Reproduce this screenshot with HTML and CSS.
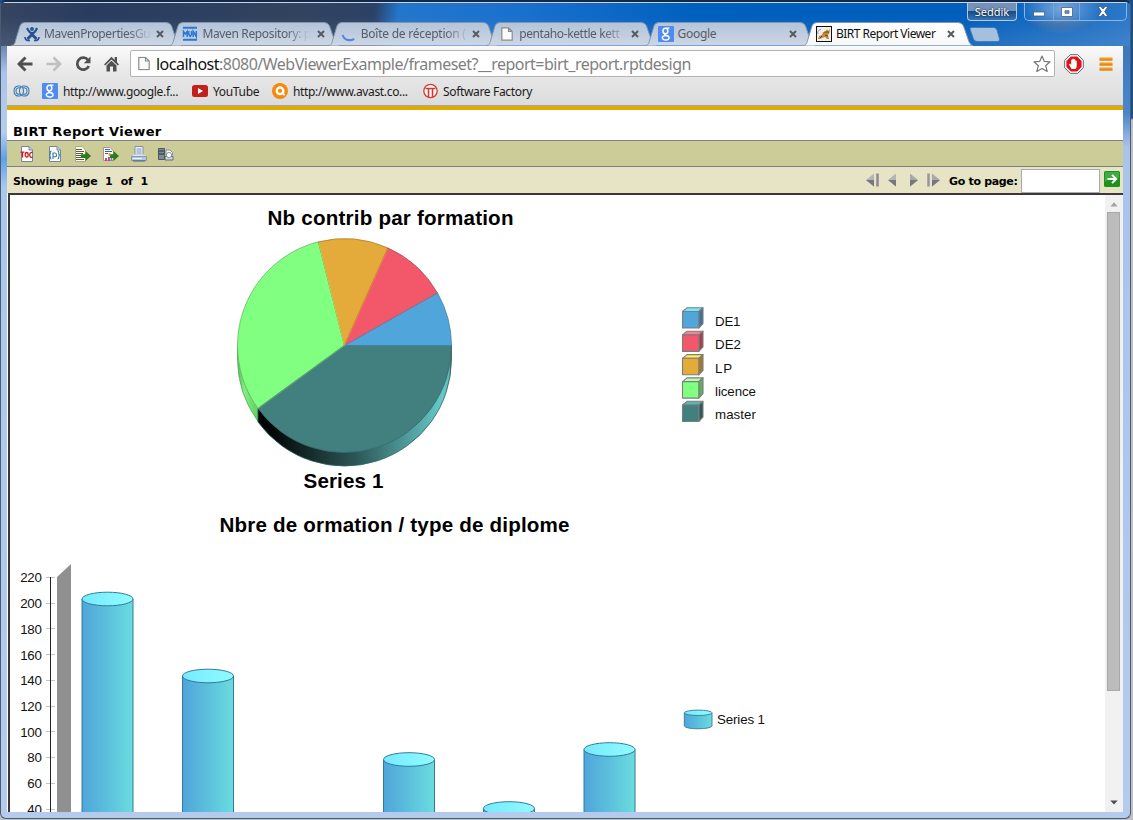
FILE: index.html
```html
<!DOCTYPE html>
<html lang="fr">
<head>
<meta charset="utf-8">
<title>BIRT Report Viewer</title>
<link rel="stylesheet" href="styles.css">
</head>
<body>
<svg class="defs" width="0" height="0">
  <defs>
    <linearGradient id="tabFill" x1="0" y1="0" x2="0" y2="1"><stop offset="0" stop-color="#b3c4da"/><stop offset="1" stop-color="#cdd6e4"/></linearGradient>
    <linearGradient id="tabActive" x1="0" y1="0" x2="0" y2="1"><stop offset="0" stop-color="#ffffff"/><stop offset="1" stop-color="#f8f8f8"/></linearGradient>
    <symbol id="tabShape" viewBox="0 0 170 24"><path d="M0 23.500C4 23.500 4 20 5 17L9 4Q10 .5 14 .5H155Q159 .5 160.500 4L165 17Q167 23.500 170 23.500" stroke="#8296b0"/></symbol>
    <symbol id="close" viewBox="0 0 8 8"><path d="M1 1L7 7M7 1L1 7" stroke="#555a60" stroke-width="1.900" fill="none"/></symbol>
    <symbol id="gicon" viewBox="0 0 16 16"><rect width="16" height="16" rx="1" fill="#4f8bf0"/><g fill="none" stroke="#fff"><ellipse cx="7.400" cy="5" rx="2.400" ry="2.800" stroke-width="1.500"/><ellipse cx="7.700" cy="11.800" rx="3.400" ry="2.200" stroke-width="1.400"/><path d="M8 2.200H11.500M7 7.500Q6 8.800 8 9.200Q10 9.600 10.600 10.800" stroke-width="1.300"/></g></symbol>
    <symbol id="page" viewBox="0 0 12 14"><path d="M.8 .8H7.500L11.200 4.500V13.200H.8ZM7.500 .8V4.500H11.200" fill="#fafafa" stroke="#8b8b8b" stroke-width="1.200"/></symbol>
  </defs>
</svg>
<div class="window">
  <header class="titlebar">
    <nav class="tabs">
      <div class="tab"><svg class="shape" width="170" height="24" fill="url(#tabFill)"><use href="#tabShape"/></svg>
        <svg class="fav" viewBox="0 0 16 16"><g fill="none" stroke="#28528f"><path d="M3 2Q5.500 7 8 7.300T13 2" stroke-width="2.200"/><path d="M8 6V8.500L3.500 13M8 8.500L12.500 13" stroke-width="3"/><path d="M.8 11Q1.500 15 6 14.500M15.200 11Q14.500 15 10 14.500" stroke-width="1.500"/></g><circle cx="8" cy="3" r="1.900" fill="#28528f"/></svg>
        <span class="label fade l1">MavenPropertiesGu</span><svg class="x"><use href="#close"/></svg></div>
      <div class="tab"><svg class="shape" width="170" height="24" fill="url(#tabFill)"><use href="#tabShape"/></svg>
        <svg class="fav" viewBox="0 0 16 16"><path d="M1 1.800H15M1 13.700H15" stroke="#2878d8" stroke-width="2"/><path d="M1.500 11V5.500L3.400 8L5.200 5.500V11M6.800 5V8.500L8.200 10.500L9.500 8.500V5M11.200 11V5.500L14.300 10.500V5" fill="none" stroke="#2878d8" stroke-width="1.500"/></svg>
        <span class="label fade l2">Maven Repository: p</span><svg class="x"><use href="#close"/></svg></div>
      <div class="tab"><svg class="shape" width="170" height="24" fill="url(#tabFill)"><use href="#tabShape"/></svg>
        <svg class="fav" viewBox="0 0 16 16"><path d="M1.600 9Q3.300 14 8 14.200Q11 14.300 13.200 12.800" fill="none" stroke="#4e8be0" stroke-width="2.200"/></svg>
        <span class="label fade l3">Boîte de réception (</span><svg class="x"><use href="#close"/></svg></div>
      <div class="tab"><svg class="shape" width="170" height="24" fill="url(#tabFill)"><use href="#tabShape"/></svg>
        <svg class="fav" viewBox="-2 -1 16 16"><use href="#page" width="12" height="14"/></svg>
        <span class="label fade l4">pentaho-kettle kett</span><svg class="x"><use href="#close"/></svg></div>
      <div class="tab"><svg class="shape" width="170" height="24" fill="url(#tabFill)"><use href="#tabShape"/></svg>
        <svg class="fav" viewBox="0 0 16 16"><use href="#gicon"/></svg>
        <span class="label l5">Google</span><svg class="x"><use href="#close"/></svg></div>
      <div class="tab active"><svg class="shape" width="170" height="24" fill="url(#tabActive)"><use href="#tabShape"/></svg>
        <svg class="fav" viewBox="0 0 16 16"><rect x=".5" y=".5" width="15" height="15" fill="#f4f0e6" stroke="#111"/><path d="M2 8Q1 4 5 3.500" fill="none" stroke="#8c959c"/><path d="M2 13L3 10L6 9L7 6L9 6L11 3L12 5L14 3L13.500 7L12 9L13 13H11L9 11L6 12L4 13Z" fill="#c18a3e"/><path d="M8 6H13M4 12L6 10M9 9L12 10" stroke="#493d27" stroke-width=".8"/></svg>
        <span class="label l6">BIRT Report Viewer</span><svg class="x"><use href="#close"/></svg></div>
      <svg class="newtab" viewBox="0 0 31 15"><path d="M3 .5H25Q27 .5 28 3L30.500 12Q31 14 29 14.500H8Q5.500 14.500 4.500 12L1 2Q.5 .5 3 .5Z" fill="#a5bfde" stroke="#3a76b8" stroke-width=".8"/></svg>
    </nav>
    <div class="controls">
      <div class="user">Seddik</div>
      <div class="buttons">
        <span><svg width="12" height="6" viewBox="0 0 12 6"><rect x=".5" y="1" width="11" height="4" fill="#fff" stroke="#4d5f78" stroke-width=".8"/></svg></span>
        <span><svg width="12" height="10" viewBox="0 0 12 10"><path d="M.5 .5H11.500V9.500H.5ZM4 3.700V6.300H8V3.700Z" fill="#fff" fill-rule="evenodd" stroke="#4d5f78" stroke-width=".8"/></svg></span>
        <span><svg width="12" height="11" viewBox="0 0 12 11"><path d="M1 .6H4L6 3L8 .6H11L7.700 5.500L11 10.400H8L6 8L4 10.400H1L4.300 5.500Z" fill="#fff" stroke="#3d4f6b" stroke-width=".8"/></svg></span>
      </div>
    </div>
  </header>

  <section class="toolbar">
    <div class="address-row">
      <svg width="16" height="16" viewBox="0 0 16 16"><path d="M8.500 1.500L2 8L8.500 14.500M2 8H15.500" fill="none" stroke="#505050" stroke-width="2.900"/></svg>
      <svg width="16" height="16" viewBox="0 0 16 16"><path d="M7.500 1.500L14 8L7.500 14.500M14 8H.5" fill="none" stroke="#c0c0c0" stroke-width="2.700"/></svg>
      <svg width="16" height="16" viewBox="0 0 16 16"><path d="M13.200 4.200A6 6 0 1 0 13.800 10" fill="none" stroke="#505050" stroke-width="2.700"/><path d="M15.500 .5V7.200H8.800Z" fill="#505050"/></svg>
      <svg class="home" width="15" height="16" viewBox="0 0 15 16"><path d="M7.500 .8L0 8.400L1.200 9.600L7.500 3.400L13.800 9.600L15 8.400L13 6.300V1H10.700V4ZM2.500 9.600L7.500 4.700L12.500 9.600V15.500H9V10.500H6V15.500H2.500Z" fill="#505050"/></svg>
      <div class="address">
        <svg width="12" height="15" viewBox="0 0 12 14"><use href="#page" width="12" height="14"/></svg>
        <span class="url"><b>localhost</b>:8080/WebViewerExample/frameset?__report=birt_report.rptdesign</span>
        <svg class="star" width="18" height="18" viewBox="0 0 18 18"><path d="M9 1L11.200 6.300L17 6.800L12.700 10.700L14.200 16.500L9 13.400L3.800 16.500L5.300 10.700L1 6.800L6.800 6.300Z" fill="#fff" stroke="#777" stroke-width="1.200" stroke-linejoin="round"/></svg>
      </div>
      <svg width="20" height="20" viewBox="0 0 20 20"><path d="M6.200 .7H13.800L19.300 6.200V13.800L13.800 19.300H6.200L.7 13.800V6.200Z" fill="#fff" stroke="#666" stroke-width="1"/><path d="M6.900 2.400H13.100L17.600 6.900V13.100L13.100 17.600H6.900L2.400 13.100V6.900Z" fill="#d8151b"/><path d="M7.500 15L5 10.500Q5 9.300 6.200 9.800L7.200 11V6Q7.800 5.200 8.400 6V5Q9.100 4.200 9.800 5V5.500Q10.600 4.700 11.200 5.600V6.800Q12 6 12.700 7V11.500Q12.700 14 11.500 15Z" fill="#fff"/></svg>
      <svg class="menu" width="14" height="14" viewBox="0 0 14 14"><path d="M.5 2H13.500M.5 7H13.500M.5 12H13.500" stroke="#f39b1c" stroke-width="3"/><path d="M.5 3H13.500M.5 8H13.500M.5 13H13.500" stroke="#d97812"/></svg>
    </div>
    <div class="bookmarks">
      <svg width="17" height="16" viewBox="0 0 17 16"><g fill="none" stroke="#3a7fb5" stroke-width="1.100"><path d="M7 3Q1 2.500 1 8T7 13M10 3Q16 2.500 16 8T10 13"/><path d="M7.500 5Q3 4 3 8T7.500 11M9.500 5Q14 4 14 8T9.500 11"/><path d="M7 3Q10.500 4 10.500 8T7 13M10 3Q6.500 4 6.500 8T10 13"/></g></svg>
      <a class="b1"><svg width="16" height="16"><use href="#gicon"/></svg><span>http://www.google.f...</span></a>
      <a class="b2"><svg width="16" height="16" viewBox="0 0 16 16"><rect y="2" width="16" height="12" rx="2.500" fill="#c2201c"/><path d="M6 5L11 8L6 11Z" fill="#fff"/></svg><span>YouTube</span></a>
      <a class="b3"><svg width="16" height="16" viewBox="0 0 16 16"><circle cx="8" cy="8" r="8" fill="#f58a0a"/><circle cx="8" cy="7.800" r="3.300" fill="none" stroke="#fff" stroke-width="2.300"/><path d="M11.300 7V10.500Q11.300 12 12.800 11.500" fill="none" stroke="#fff" stroke-width="1.800"/></svg><span>http://www.avast.co...</span></a>
      <a class="b4"><svg width="15" height="16" viewBox="0 0 15 16"><circle cx="7.500" cy="8" r="6.700" fill="#fff" stroke="#d33a30" stroke-width="1.300"/><path d="M2.500 5.500H12.500M5.500 5.500V14M9.500 5.500V14" fill="none" stroke="#d33a30" stroke-width="1.600"/></svg><span>Software Factory</span></a>
    </div>
  </section>

  <main class="viewer">
    <h1><span>BIRT Report Viewer</span></h1>
    <div class="tools">
      <svg width="16" height="16" viewBox="0 0 16 16"><path d="M2.500 .5H10L13.500 4V15.500H2.500Z" fill="#fff" stroke="#75869a"/><path d="M10 .5V4H13.500" fill="#c7d6e8" stroke="#75869a"/><g fill="none" stroke="#d01c1c" stroke-width="1.300"><path d="M1.500 6.200H5.500M3.500 6V11.500"/><ellipse cx="7.700" cy="8.800" rx="1.500" ry="2.300"/><path d="M13.500 6.500Q10.700 5.800 10.700 8.800T13.500 11.200"/></g></svg>
      <svg width="16" height="16" viewBox="0 0 16 16"><path d="M2.500 .5H10L13.500 4V15.500H2.500Z" fill="#fff" stroke="#75869a"/><path d="M10 .5V4H13.500" fill="#c7d6e8" stroke="#75869a"/><g fill="none" stroke="#2b7bb0" stroke-width="1.100"><path d="M4.500 5Q3 5 3.300 7Q3.300 9 2 9Q3.300 9 3.300 11Q3 13 4.500 13M10.500 5Q12 5 11.700 7Q11.700 9 13 9Q11.700 9 11.700 11Q12 13 10.500 13M6 13V7H8Q9.500 7 9.500 9T8 10.800H6"/></g></svg>
      <svg width="18" height="16" viewBox="0 0 18 16"><path d="M1.500 .5H8L11.500 4V15.500H1.500Z" fill="#fffce8" stroke="#aaa98c"/><path d="M2 3.500H8M2 5.500H10M2 7.500H9M2 9.500H7M2 11.500H8M2 13.500H10" stroke="#5b5b4e" stroke-width="1"/><path d="M7 8.300H11.500V5L17 10L11.500 15V11.900H7Z" fill="#2d7b1c"/></svg>
      <svg width="18" height="16" viewBox="0 0 18 16"><path d="M1.500 1.500H8L11.500 5V14.500H1.500Z" fill="#fff" stroke="#b0977c"/><path d="M3 3.500H8M3 5.500H10M3 7.500H6" stroke="#2b62c8" stroke-width="1"/><path d="M4 12V15M7 11V15" stroke="#d82d8b" stroke-width="1.800"/><path d="M9.500 11V15" stroke="#2aa6d0" stroke-width="1.800"/><path d="M8 8.300H11.500V5L17 10L11.500 15V11.900H8Z" fill="#2d7b1c"/><path d="M7.500 10V7" stroke="#e79824" stroke-width="1.800"/></svg>
      <svg width="16" height="16" viewBox="0 0 16 16"><path d="M4 .5H12V9H4Z" fill="#eef4fb" stroke="#8091a8"/><path d="M5.500 3H10.500M5.500 5H10.500M5.500 7H10.500" stroke="#7991af"/><path d="M3 8.500H13L15.500 11H.5Z" fill="#dce7f3"/><path d="M.5 10.500H15.500V14.500H.5Z" fill="#b4c7de" stroke="#7387a8" stroke-width=".8"/><path d="M2 12.500H11" stroke="#eff5ff"/><path d="M2 15H14" stroke="#4d6182"/></svg>
      <svg width="16" height="16" viewBox="0 0 16 16"><path d="M.5 2.500H6.500V13.500H.5Z" fill="#7e8b95" stroke="#4c5964"/><path d="M1 5H6M1 8H6" stroke="#26313b"/><path d="M8 4H12L14.500 6.500V9H8Z" fill="#f4f7fb" stroke="#74808c" stroke-width=".8"/><path d="M7 10.500H15V14H7Z" fill="#cbd6e3" stroke="#4c5964" stroke-width=".8"/><circle cx="11" cy="9" r="2.600" fill="#fff" stroke="#74808c" stroke-width=".8"/></svg>
    </div>
    <div class="navbar">
      <span class="showing">Showing page</span><span class="num">1</span><span class="of">of</span><span class="num2">1</span>
      <div class="pager">
        <svg width="13" height="14" viewBox="0 0 13 14"><path d="M8 .5V13.500L0 7Z" fill="#b5b5b8"/><path d="M8 7V13.500L0 7Z" fill="#77777c"/><path d="M11.500 .5V13.500" stroke="#8a8a8e" stroke-width="2.500"/></svg>
        <svg width="8" height="14" viewBox="0 0 8 14"><path d="M8 .5V13.500L0 7Z" fill="#b5b5b8"/><path d="M8 7V13.500L0 7Z" fill="#77777c"/></svg>
        <svg class="next" width="8" height="14" viewBox="0 0 8 14"><path d="M0 .5V13.500L8 7Z" fill="#a9a9ac"/><path d="M0 7V13.500L8 7Z" fill="#77777c"/></svg>
        <svg width="13" height="14" viewBox="0 0 13 14"><path d="M5 .5V13.500L13 7Z" fill="#a9a9ac"/><path d="M5 7V13.500L13 7Z" fill="#77777c"/><path d="M1.500 .5V13.500" stroke="#96969a" stroke-width="2.500"/></svg>
      </div>
      <label>Go to page:</label>
      <input type="text" aria-label="Go to page">
      <svg class="go" width="16" height="16" viewBox="0 0 16 16"><rect width="16" height="16" rx="1.500" fill="#1d931d"/><path d="M1 1H15V7Q7 6 1 11Z" fill="#5cb95c" opacity=".6"/><path d="M3.500 8H12M8 3.800L12.200 8L8 12.200" fill="none" stroke="#fff" stroke-width="1.900"/></svg>
    </div>
    <div class="report">
      <svg class="charts" width="1095" height="617" viewBox="10 195 1095 617">
        <defs>
          <linearGradient id="side" gradientUnits="userSpaceOnUse" x1="257" y1="0" x2="452" y2="0"><stop offset="0" stop-color="#000"/><stop offset=".1" stop-color="#050b0b"/><stop offset=".5" stop-color="#2b5555"/><stop offset=".95" stop-color="#67c9c9"/><stop offset=".985" stop-color="#5fb8b8"/><stop offset="1" stop-color="#2d5c5c"/></linearGradient>
          <linearGradient id="sideGreen" x1="0" y1="0" x2="1" y2="0"><stop offset="0" stop-color="#5dba5d"/><stop offset=".35" stop-color="#80f080"/><stop offset="1" stop-color="#62cc62"/></linearGradient>
          <linearGradient id="body"><stop offset="0" stop-color="#50a5da"/><stop offset=".5" stop-color="#5cc0dc"/><stop offset="1" stop-color="#6bdcdf"/></linearGradient>
          <linearGradient id="lid"><stop offset="0" stop-color="#76eafd"/><stop offset="1" stop-color="#90fbff"/></linearGradient>
          <g id="cyl" stroke="#327a9d"><path d="M0 0V240H51V0" fill="url(#body)"/><ellipse cx="25.500" cy="0" rx="25.500" ry="6.800" fill="url(#lid)"/></g>
        </defs>
        <g class="title">
          <text x="267.500" y="225" textLength="246">Nb contrib par formation</text>
          <text x="303.500" y="488" textLength="80">Series 1</text>
          <text x="219.500" y="532" textLength="350">Nbre de ormation / type de diplome</text>
        </g>
        <g stroke-width=".8">
          <path d="M237.500 345.500A107 107 0 0 0 258 408.500V421.500Q237.500 393 237.500 359Z" fill="url(#sideGreen)" stroke="#5aa85a"/>
          <path d="M451.500 345.500V359A107 107 0 0 1 258 422V408.500Z" fill="url(#side)" stroke="#2f6060"/>
          <path d="M344.500 345.500H451.500A107 107 0 0 1 258 408.500Z" fill="#427f7f" stroke="#376c6c"/>
          <path d="M344.500 345.500L258 408.500A107 107 0 0 1 318.500 241.800Z" fill="#80ff80" stroke="#67b967"/>
          <path d="M344.500 345.500L318.500 241.800A107 107 0 0 1 388 248Z" fill="#e5ab3a" stroke="#a98036"/>
          <path d="M344.500 345.500L388 248A107 107 0 0 1 437.500 293Z" fill="#f2586a" stroke="#b14654"/>
          <path d="M344.500 345.500L437.500 293A107 107 0 0 1 451.500 345.500Z" fill="#50a5da" stroke="#3e7da5"/>
        </g>
        <g stroke-width="1.200">
          <path d="M344.500 345.500L438 292.800" stroke="#a07295" stroke-width=".8"/>
          <path d="M344.500 345.500L319 243" stroke="#c8c44a"/>
          <path d="M344.500 345.500L387.600 249" stroke="#e38548"/>
          <path d="M344.500 345.500L259 407.800" stroke="#5a9f74"/>
        </g>
        <g stroke="#7d7d7d" stroke-width="1.100" stroke-linejoin="round">
          <g transform="translate(682.500 307.500)"><path d="M0 4L4.500 .3H20.500L16.300 4Z" fill="#70ebfc"/><path d="M16.300 4L20.500 .3V16L16.300 20.500Z" fill="#39759b"/><path d="M0 4H16.300V20.500H0Z" fill="#50a5da"/></g>
          <g transform="translate(682.500 330.900)"><path d="M0 4L4.500 .3H20.500L16.300 4Z" fill="#ff7d97"/><path d="M16.300 4L20.500 .3V16L16.300 20.500Z" fill="#aa3f4c"/><path d="M0 4H16.300V20.500H0Z" fill="#f2586a"/></g>
          <g transform="translate(682.500 354.300)"><path d="M0 4L4.500 .3H20.500L16.300 4Z" fill="#fff253"/><path d="M16.300 4L20.500 .3V16L16.300 20.500Z" fill="#a37a2a"/><path d="M0 4H16.300V20.500H0Z" fill="#e5ab3a"/></g>
          <g transform="translate(682.500 377.600)"><path d="M0 4L4.500 .3H20.500L16.300 4Z" fill="#b5ffb5"/><path d="M16.300 4L20.500 .3V16L16.300 20.500Z" fill="#5bb45b"/><path d="M0 4H16.300V20.500H0Z" fill="#80ff80"/></g>
          <g transform="translate(682.500 401)"><path d="M0 4L4.500 .3H20.500L16.300 4Z" fill="#5db4b4"/><path d="M16.300 4L20.500 .3V16L16.300 20.500Z" fill="#2e5959"/><path d="M0 4H16.300V20.500H0Z" fill="#427f7f"/></g>
        </g>
        <g class="legend">
          <text x="715" y="326" textLength="25.500">DE1</text>
          <text x="715" y="349" textLength="26">DE2</text>
          <text x="715" y="373" textLength="17">LP</text>
          <text x="715" y="396" textLength="41">licence</text>
          <text x="715" y="419" textLength="41">master</text>
          <text x="717" y="724" textLength="48">Series 1</text>
        </g>
        <g class="axis">
          <text x="41.500" y="582">220</text><text x="41.500" y="608">200</text><text x="41.500" y="634">180</text><text x="41.500" y="660">160</text><text x="41.500" y="685">140</text><text x="41.500" y="711">120</text><text x="41.500" y="737">100</text><text x="41.500" y="762">80</text><text x="41.500" y="788">60</text><text x="41.500" y="814">40</text>
        </g>
        <path d="M46 577.500H55M46 603.500H55M46 628.500H55M46 654.500H55M46 680.500H55M46 706.500H55M46 731.500H55M46 757.500H55M46 783.500H55M46 809.500H55" stroke="#c4c4c4"/>
        <path d="M50.500 577V812" stroke="#222"/>
        <path d="M57 577L71 564V812H57Z" fill="#909090"/>
        <use href="#cyl" x="82" y="599"/>
        <use href="#cyl" x="182.500" y="676"/>
        <use href="#cyl" x="383.500" y="759.500"/>
        <use href="#cyl" x="483.500" y="808.500"/>
        <use href="#cyl" x="584" y="749.500"/>
        <g stroke="#327a9d" stroke-width=".9"><path d="M684.300 713V726Q686 728.700 698 728.800Q710 728.700 712 726V713" fill="url(#body)"/><ellipse cx="698.200" cy="712.800" rx="13.900" ry="2.700" fill="url(#lid)"/></g>
      </svg>
      <div class="scrollbar">
        <svg width="8" height="5" viewBox="0 0 8 5"><path d="M4 .3L7.700 4.500H.3Z" fill="#a3a3a3"/></svg>
        <div class="thumb"></div>
        <svg class="down" width="8" height="5" viewBox="0 0 8 5"><path d="M.3 .5H7.700L4 4.600Z" fill="#4d4d4d"/></svg>
      </div>
    </div>
  </main>
</div>
</body>
</html>
```
FILE: styles.css
```css
* { box-sizing: border-box; }
body {
  margin: 0; width: 1133px; height: 820px; overflow: hidden;
  background: linear-gradient(#15508f 0 88px, #1c4f86 118px, #c0c0c0 120px);
  font-family: "Noto Sans", "Open Sans", sans-serif;
}
.defs { position: absolute; }
svg { display: block; flex: none; }
.window {
  display: flex; flex-direction: column;
  width: 1131px; height: 819px; padding: 2px 7px 6px 6px;
  border: 1px solid #4d5b70; border-top: 2px solid #13294a; border-radius: 6px;
  background:
    linear-gradient(#c8d4e2, #c8d4e2) 0 0 / 100% 1px no-repeat,
    radial-gradient(ellipse 40px 26px at 1060px 6px, #b4cdec99, transparent) no-repeat,
    radial-gradient(ellipse 36px 8px at 1060px 22px, #30486e88, transparent) no-repeat,
    linear-gradient(transparent 14px, #9db2cf30 44px, transparent 44px) no-repeat,
    linear-gradient(97deg, #36445f 0, #293c60 90px, #32435f 300px, #2c4167 372px, #2376cc 396px, #1970cd 520px, #0060bf 690px, #005ebc 960px, #2e79c8 1131px) 0 0 / 100% 44px no-repeat,
    linear-gradient(#3b79bc 46px, #4c86ca 112px, #aac3ea 145px, #b3cbee 100%) 100% 0 / 9px 100% no-repeat,
    linear-gradient(#6f8cb5 46px, #a9c4ea 70px, #b7cdec 130px, #5fa0e6 157px, #a9c8ef 185px, #b4cbed 100%);
}
.titlebar { display: flex; height: 42px; flex: none; }
.tabs { display: flex; padding: 18px 0 0 4px; }
.tab {
  position: relative; display: flex; align-items: center; width: 158.4px; height: 24px;
  padding: 0 3px 0 13px; color: #565c66; font-size: 12px;
}
.shape { position: absolute; left: 0; top: 0; }
.fav { position: relative; width: 16px; height: 16px; }
.label { position: relative; flex: 1; margin-left: 4px; white-space: nowrap; line-height: 18px; }
.fade { -webkit-mask-image: linear-gradient(90deg, #000 84px, transparent 108px); mask-image: linear-gradient(90deg, #000 84px, transparent 108px); }
.l1 { letter-spacing: -.35px; }
.l2 { letter-spacing: -.35px; }
.l3 { letter-spacing: -.25px; }
.l4 { letter-spacing: -.4px; }
.l5 { letter-spacing: -.3px; }
.l6 { letter-spacing: -.5px; }
.x { position: relative; width: 8px; height: 8px; margin: 0 3px 0 6px; }
.active { color: #111; }
.newtab { width: 31px; height: 15px; margin: 5px 0 0 8px; }
.controls { position: absolute; left: 967px; top: 3px; display: flex; gap: 7px; }
.user {
  width: 50px; height: 18px; line-height: 17px; text-align: center; color: #fff; font-size: 11px;
  border: 1px solid #b4cae2; border-top: 0; border-radius: 0 0 4px 4px; text-shadow: 0 0 2px #000;
  background: linear-gradient(#7492b7 50%, #174d8c 50%, #3974b0);
}
.buttons { display: flex; height: 18px; border: 1px solid #8eb5e0; border-top: 0; border-radius: 0 0 5px 5px; }
.buttons span { display: flex; align-items: center; justify-content: center; width: 26px; border-left: 1px solid #79a6d9; }
.buttons span:first-child { width: 28px; padding-top: 4px; border-left: 0; }
.buttons span:last-child { width: 47px; }

.toolbar { flex: none; height: 60px; border-bottom: 1px solid #a4a6aa; background: linear-gradient(#fafafa, #e8e8e8 45%, #dcdcdc); }
.address-row { display: flex; align-items: center; gap: 13px; height: 34px; padding: 1px 10px 0 10px; }
.address-row > .home { margin-right: -2px; }
.address {
  display: flex; align-items: center; width: 926px; height: 27px; margin-right: -4px; padding: 0 3px 0 7px;
  background: #fff; border: 1px solid #b3b3b3; border-radius: 2px;
}
.url { flex: 1; margin-left: 6px; color: #7f7f7f; font-size: 16px; line-height: 22px; letter-spacing: -.51px; white-space: nowrap; }
.url b { font-weight: 400; color: #111; }
.menu { margin-left: 2px; }
.bookmarks { display: flex; align-items: center; height: 22px; padding-left: 6px; color: #1a1a1a; font-size: 12px; letter-spacing: -.34px; }
.bookmarks a { display: flex; align-items: center; gap: 5px; white-space: nowrap; }
.b1 { margin-left: 12px; width: 150px; }
.b2 { width: 80px; }
.b3 { width: 151px; }

.viewer { display: flex; flex-direction: column; flex: 1; min-height: 0; background: #fff; border-top: 4px solid #e0ab00; font-family: "DejaVu Sans", Verdana, sans-serif; font-weight: 700; }
h1 { margin: 0; height: 30px; padding: 14px 0 0 6px; font-size: 13px; line-height: 15px; letter-spacing: .36px; color: #000; flex: none; }
.tools { display: flex; align-items: center; gap: 11px; height: 27px; padding: 1px 0 0 12px; border: solid #808080; border-width: 1px 0; background: #cccc99; flex: none; }
.tools svg:nth-child(2) { margin-left: 1px; }
.tools svg:nth-child(4) { margin-left: -1px; }
.navbar { display: flex; align-items: center; height: 26px; padding: 1px 3px 0 6px; background: #e6e4c5; font-size: 11px; color: #000; flex: none; }
.navbar span { line-height: 14px; padding-top: 2px; white-space: nowrap; }
.showing { width: 84px; letter-spacing: -.25px; }
.num { margin-left: 8px; }
.of { margin-left: 8px; letter-spacing: -.3px; }
.num2 { margin-left: 8px; }
.pager { display: flex; align-items: center; gap: 9px; height: 14px; margin: -2px 9px 0 auto; }
.next { margin-left: 5px; }
.navbar label { width: 68px; margin-right: 4px; padding-top: 2px; letter-spacing: -.32px; white-space: nowrap; }
.navbar input { width: 79px; height: 24px; margin: 0; padding: 0; border: 1px solid #a9a9a9; background: #fff; }
.go { margin: -3px 0 0 4px; }
.report { display: flex; flex: 1; min-height: 0; border: solid #3b373d; border-width: 2px 0 0 2px; margin-left: 1px; overflow: hidden; }
.scrollbar { display: flex; flex-direction: column; align-items: center; width: 18px; height: 617px; padding: 7px 2px 7px 1px; background: #f1f1f1; flex: none; }
.thumb { width: 13px; height: 479px; margin-top: 5px; border: 1px solid #a8a8a8; background: #bcbcbc; flex: none; }
.down { margin-top: auto; }
.charts { background: #fff; }
.title, .legend, .axis { font-family: "Liberation Sans", Arial, sans-serif; font-size: 13.300px; font-weight: 400; fill: #111; }
.title { font-size: 20.600px; font-weight: 700; fill: #000; }
.axis { text-anchor: end; letter-spacing: -.3px; }
```
